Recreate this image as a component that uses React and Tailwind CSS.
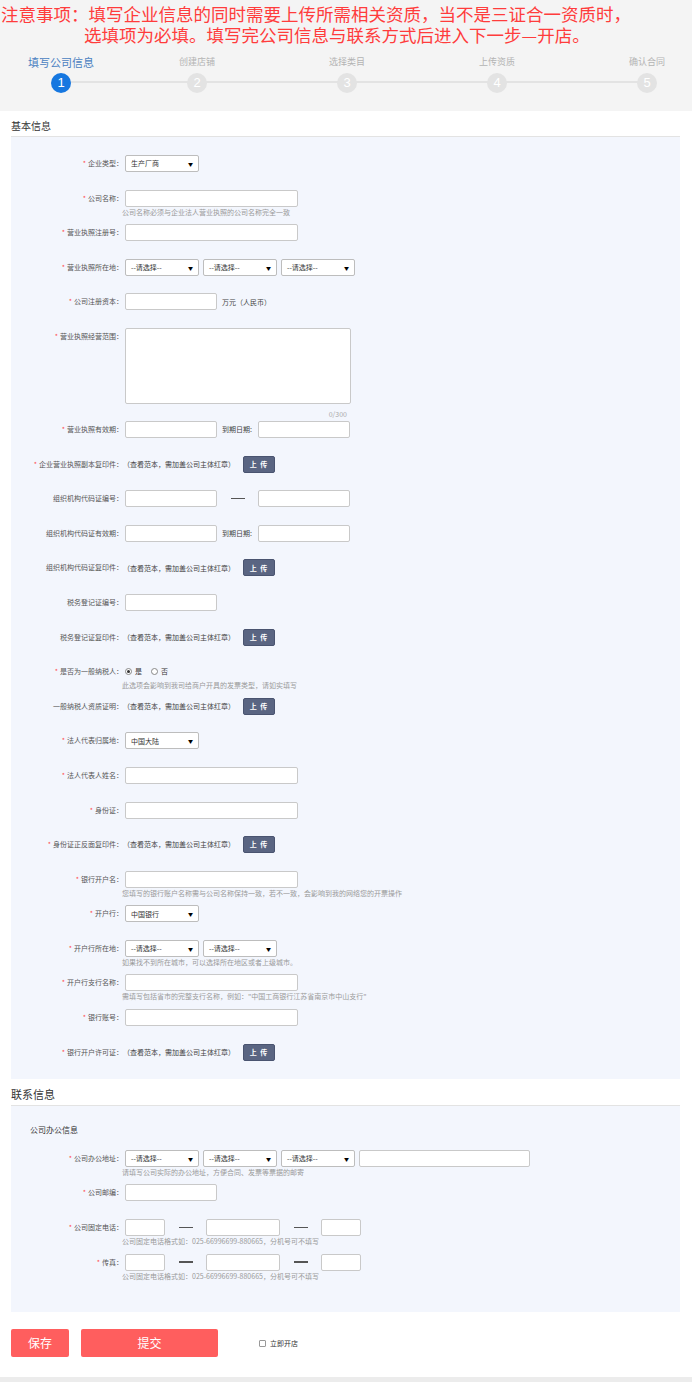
import React from 'react';

const Star = () => <span className="text-[#ff4d4d] mr-[2px]">*</span>;

function Label({ req, children }) {
  return (
    <div className="w-[112px] shrink-0 text-right text-[7px] leading-[17px] text-[#555]">
      {req && <Star />}
      {children}：
    </div>
  );
}

function Help({ children }) {
  return <div className="ml-[-3px] text-[7px] leading-[10px] text-[#9a9a9a] whitespace-nowrap">{children}</div>;
}

function Row({ label, req, help, h = 'h-[34.6px]', children }) {
  return (
    <div className={`flex ${h}`}>
      <Label req={req}>{label}</Label>
      <div className="ml-[2px] flex flex-col">
        <div className="flex items-center">{children}</div>
        {help && <Help>{help}</Help>}
      </div>
    </div>
  );
}

function Box({ w = 'w-[173px]' }) {
  return <div className={`${w} h-[17px] shrink-0 bg-white border border-[#c9c9c9] rounded-[2px]`} />;
}

function Sel({ text = '--请选择--', w = 'w-[74px]' }) {
  return (
    <div className={`${w} h-[17px] shrink-0 bg-white border border-[#bdbdbd] rounded-[2px] flex items-center justify-between pl-[5px] pr-[5px] text-[7px] text-[#333]`}>
      <span>{text}</span>
      <span className="text-[5px] text-black">▼</span>
    </div>
  );
}

function Dash() {
  return (
    <div className="w-[41px] flex justify-center shrink-0">
      <div className="w-[14px] h-[1.5px] bg-[#555]" />
    </div>
  );
}

function Upload() {
  return (
    <>
      <span className="text-[7px] text-[#444] ml-[-2px] whitespace-nowrap">（查看范本，需加盖公司主体红章）</span>
      <div className="ml-[8px] w-[32px] h-[17px] bg-[#5a6582] border border-[#4a5470] rounded-[2px] text-white text-[7px] font-bold tracking-[1px] flex items-center justify-center">上 传</div>
    </>
  );
}

function Radio({ on, label }) {
  return (
    <div className="flex items-center mr-[9px]">
      <div className="w-[7px] h-[7px] rounded-full border border-[#888] bg-white flex items-center justify-center">
        {on && <div className="w-[3px] h-[3px] rounded-full bg-[#333]" />}
      </div>
      <span className="ml-[3px] text-[7px] text-[#333]">{label}</span>
    </div>
  );
}

const steps = ['填写公司信息', '创建店铺', '选择类目', '上传资质', '确认合同'];

export default function App() {
  return (
    <div className="w-[692px] h-[1382px] bg-white font-['Noto_Sans_CJK_SC','Noto_Sans',sans-serif] overflow-hidden">
      {/* notice + steps */}
      <div className="bg-[#f4f4f4] h-[111px] pt-[3px]">
        <div className="text-[#ff3c3c] text-[17.5px] leading-[21px] whitespace-nowrap">
          <div className="pl-[1px]">注意事项：填写企业信息的同时需要上传所需相关资质，当不是三证合一资质时，</div>
          <div className="pl-[84px]">选填项为必填。填写完公司信息与联系方式后进入下一步—开店。</div>
        </div>
        <div className="relative mt-[10px] flex">
          <div className="absolute left-[62px] w-[588px] top-[26px] h-[2px] bg-[#e3e3e3]" />
          {steps.map((s, i) => (
            <div key={s} className={`${i === 0 ? 'w-[122px]' : 'w-[150px]'} shrink-0 flex flex-col items-center`}>
              <div className={i === 0 ? 'text-[11px] leading-[14px] text-[#4a7fc1]' : 'text-[9px] leading-[14px] text-[#b3b3b3]'}>{s}</div>
              <div
                className={`relative mt-[4px] w-[20px] h-[20px] rounded-full flex items-center justify-center text-[13px] font-['Liberation_Sans',sans-serif] ${
                  i === 0 ? 'bg-[#1677e0] text-white' : 'bg-[#e3e3e3] text-white'
                }`}
              >
                {i + 1}
              </div>
            </div>
          ))}
        </div>
      </div>

      {/* basic info */}
      <div className="pl-[11px] pr-[12px]">
        <div className="h-[26px] flex items-end pb-[3px] border-b border-[#e3e3e3] text-[10px] text-[#333]">基本信息</div>
        <div className="bg-[#f3f6fd] pt-[18px] pb-[1px]">
          <Row label="企业类型" req><Sel text="生产厂商" /></Row>
          <Row label="公司名称" req help="公司名称必须与企业法人营业执照的公司名称完全一致"><Box /></Row>
          <Row label="营业执照注册号" req><Box /></Row>
          <Row label="营业执照所在地" req>
            <Sel /><div className="w-[4px]" /><Sel /><div className="w-[4px]" /><Sel />
          </Row>
          <Row label="公司注册资本" req>
            <Box w="w-[92px]" />
            <span className="ml-[5px] text-[7px] text-[#444]">万元（人民币）</span>
          </Row>
          <div className="flex h-[93px]">
            <Label req>营业执照经营范围</Label>
            <div className="ml-[2px]">
              <div className="w-[226px] h-[76px] bg-white border border-[#c9c9c9] rounded-[2px]" />
              <div className="w-[226px] mt-[5px] pr-[4px] text-right text-[7px] leading-[10px] text-[#aaa]">0/300</div>
            </div>
          </div>
          <Row label="营业执照有效期" req>
            <Box w="w-[92px]" />
            <span className="ml-[5px] w-[36px] text-[7px] text-[#444]">到期日期:</span>
            <Box w="w-[92px]" />
          </Row>
          <Row label="企业营业执照副本复印件" req><Upload /></Row>
          <Row label="组织机构代码证编号">
            <Box w="w-[92px]" /><Dash /><Box w="w-[92px]" />
          </Row>
          <Row label="组织机构代码证有效期">
            <Box w="w-[92px]" />
            <span className="ml-[5px] w-[36px] text-[7px] text-[#444]">到期日期:</span>
            <Box w="w-[92px]" />
          </Row>
          <Row label="组织机构代码证复印件"><Upload /></Row>
          <Row label="税务登记证编号"><Box w="w-[92px]" /></Row>
          <Row label="税务登记证复印件"><Upload /></Row>
          <Row label="是否为一般纳税人" req help="此选项会影响到我司给商户开具的发票类型，请如实填写">
            <div className="h-[17px] flex items-center">
              <Radio on label="是" />
              <Radio label="否" />
            </div>
          </Row>
          <Row label="一般纳税人资质证明"><Upload /></Row>
          <Row label="法人代表归属地" req><Sel text="中国大陆" /></Row>
          <Row label="法人代表人姓名" req><Box /></Row>
          <Row label="身份证" req><Box /></Row>
          <Row label="身份证正反面复印件" req><Upload /></Row>
          <Row label="银行开户名" req help="您填写的银行账户名称需与公司名称保持一致，若不一致，会影响到我的网络您的开票操作"><Box /></Row>
          <Row label="开户行" req><Sel text="中国银行" /></Row>
          <Row label="开户行所在地" req help="如果找不到所在城市，可以选择所在地区或者上级城市。">
            <Sel /><div className="w-[4px]" /><Sel />
          </Row>
          <Row label="开户行支行名称" req help={'需填写包括省市的完整支行名称，例如："中国工商银行江苏省南京市中山支行"'}><Box /></Row>
          <Row label="银行账号" req><Box /></Row>
          <Row label="银行开户许可证" req><Upload /></Row>
        </div>

        {/* contact info */}
        <div className="h-[27px] flex items-end pb-[3px] border-b border-[#e3e3e3] text-[11px] text-[#333]">联系信息</div>
        <div className="bg-[#f3f6fd] pt-[18px] pb-[24px]">
          <div className="pl-[19px] text-[8px] leading-[12px] text-[#333] mb-[13.5px]">公司办公信息</div>
          <Row label="公司办公地址" req help="请填写公司实际的办公地址，方便合同、发票等票据的邮寄">
            <Sel /><div className="w-[4px]" /><Sel /><div className="w-[4px]" /><Sel /><div className="w-[4px]" /><Box w="w-[171px]" />
          </Row>
          <Row label="公司邮编" req><Box w="w-[92px]" /></Row>
          <Row label="公司固定电话" req help="公司固定电话格式如：025-66996699-880665，分机号可不填写">
            <Box w="w-[40px]" /><Dash /><Box w="w-[74px]" /><Dash /><Box w="w-[40px]" />
          </Row>
          <Row label="传真" req help="公司固定电话格式如：025-66996699-880665，分机号可不填写">
            <Box w="w-[40px]" /><Dash /><Box w="w-[74px]" /><Dash /><Box w="w-[40px]" />
          </Row>
        </div>

        {/* actions */}
        <div className="flex items-center pt-[17px] pb-[20px]">
          <div className="w-[58px] h-[28px] bg-[#ff5e5e] rounded-[2px] text-white text-[12px] flex items-center justify-center">保存</div>
          <div className="ml-[12px] w-[137px] h-[28px] bg-[#ff5e5e] rounded-[2px] text-white text-[12px] flex items-center justify-center">提交</div>
          <div className="ml-[41px] w-[7px] h-[7px] border border-[#999] rounded-[1px] bg-white" />
          <span className="ml-[4px] text-[7px] text-[#333]">立即开店</span>
        </div>
      </div>
      <div className="h-[5px] bg-[#ececec]" />
    </div>
  );
}
